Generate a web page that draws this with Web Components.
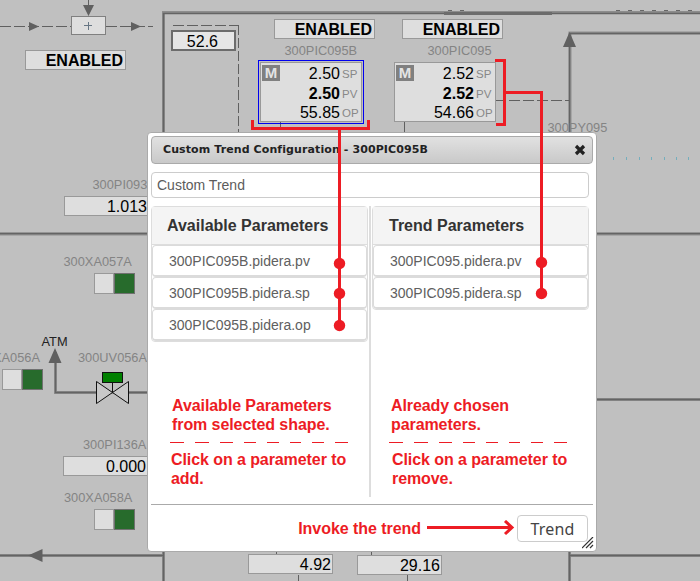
<!DOCTYPE html>
<html lang="en">
<head>
<meta charset="utf-8">
<title>Custom Trend Configuration</title>
<style>
body{margin:0;width:700px;height:581px;overflow:hidden;background:#c0c0c0;font-family:"Liberation Sans",Arial,sans-serif}
</style>
</head>
<body>
<trend-screen></trend-screen>
<script>
const define=(name,html,setup)=>customElements.define(name,class extends HTMLElement{
  connectedCallback(){
    if(this.shadowRoot)return;
    const t=document.createElement('template');t.innerHTML=html;
    this.attachShadow({mode:'open'}).append(t.content.cloneNode(true));
    if(setup)setup(this,this.shadowRoot);
  }
});
const place=el=>{for(const [a,p] of [['x','left'],['y','top'],['w','width'],['h','height']])
  if(el.hasAttribute(a))el.style[p]=el.getAttribute(a)+'px';};

/* Plain tag name next to an instrument */
define('tag-label',`<style>:host{position:absolute;font-size:12.8px;line-height:16px;color:#848484;white-space:nowrap}</style><slot></slot>`,place);

/* Bordered readout, right-aligned */
define('value-box',`<style>:host{position:absolute;box-sizing:border-box;border:1px solid #999;background:#dedede;color:#000;font-size:16px;line-height:20px;text-align:right;padding-right:1px;white-space:nowrap}
:host([bold]){font-weight:bold;padding-right:2px}
:host([frame]){border:2px solid #6c6c6c;background:#e6e6e6;padding-right:16px;line-height:19px}</style><slot></slot>`,place);

/* Two-segment status lamp */
define('status-lamp',`<style>:host{position:absolute;display:flex;width:41px;height:21px}
i{box-sizing:border-box;width:20px;border:1px solid #999;background:#dedede}i+i{width:21px;border-color:#707070;background:#276b2c}</style><i></i><i></i>`,place);

/* PID controller faceplate */
define('pid-face',`<style>:host{position:absolute;box-sizing:border-box;width:102px;height:60px;border:1px solid #999;background:#dedede;padding:0 4px 0 1px;display:grid;grid-template-columns:18px 1fr 17px;grid-template-rows:20px 19px 20px}
:host([selected]){outline:1px solid #0000f0;outline-offset:1px}
b.m{background:#808080;color:#e4e4e4;font:bold 15px/16px "Liberation Sans";width:18px;height:16px;margin-top:2px;text-align:center}
.v{font-size:16px;line-height:21px;text-align:right;color:#000}.s{font-size:11.5px;line-height:22px;color:#888;padding-left:2px}
.p{font-weight:bold}</style>
<b class="m">M</b><span class="v"><slot name="sp"></slot></span><span class="s">SP</span>
<i></i><span class="v p"><slot name="pv"></slot></span><span class="s">PV</span>
<i></i><span class="v"><slot name="op"></slot></span><span class="s">OP</span>`,place);

define('pipe-lines',`<style>:host{position:absolute;left:0;top:0}svg{display:block}</style>
<svg width="700" height="581" fill="none">
<g stroke="#8d8d8d" stroke-width="3">
<path d="M163.500 581V12.500H700M0 234H148M595 234H700M55.500 352V392.500H148M595 399.500H700M570 133V33H700M0 555.500H163M569.500 551V581M569.500 555.500H700"/>
</g>
<g stroke="#646464" stroke-width="1.400">
<path d="M163.500 581V13.500H700M0 233.500H148M595 233.500H700M55.500 352V392.500H148M595 399.500H700M569.500 133V33.500H700M0 555.500H163M569.500 551V581M569.500 555.500H700"/>
</g>
<path d="M444 13.500H552" stroke="#6c6c6c" stroke-width="3"/><path d="M448 10.500H466M616 10.500H693" stroke="#666" stroke-dasharray="4 8"/>
<g stroke="#606060"><path d="M0 26.500H71M106 26.500H153M173 25.500H239M495 100.500H569" stroke-dasharray="11 3"/>
<path d="M238.500 25V133" stroke-dasharray="10 3"/><path d="M88.500 0V8M280.500 122V129M404.500 121V133M276.500 551V554M298.500 575V581M371.500 551V555M407.500 575V581"/></g>
<g fill="#606060"><path d="M83 5H94L88.500 16ZM29 22L39 26.500L29 31ZM131 22L141 26.500L131 31ZM569.500 32L576 47H563ZM55 348L61.500 363H48.500ZM28 555.500L42.500 549V562Z"/></g>
<rect x="71.500" y="16.500" width="34" height="18" fill="#dedede" stroke="#808080"/>
<path d="M84 25.500H92M88.500 22V30" stroke="#677684"/>
<g stroke="#111"><path d="M112.500 383V393"/><rect x="102.500" y="372.500" width="20" height="10" fill="#008000"/><path d="M96.500 381.500L128.500 403.500V381.500L96.500 403.500Z" fill="#c8c8c8"/></g>
<path d="M613.500 157v3M626.500 157v3M639.500 157v3M651.500 157v3M664.500 157v3M676.500 157v3M688.500 157v3" stroke="#74aebd"/>
</svg>`);

define('param-item',`<style>:host{box-sizing:border-box;display:block;height:32px;border:1px solid #dbdbdb;border-bottom-width:2px;border-radius:4px;background:#fff;padding-left:16px;font-size:14px;line-height:30px;color:#606060}</style><slot></slot>`);

define('param-list',`<style>:host{box-sizing:border-box;display:block;width:217px;border:1px solid #ddd;border-radius:4px;background:#fff}
h2{box-sizing:border-box;margin:0;height:38px;border-bottom:1px solid #ddd;background:#f4f4f4;color:#333;font:bold 16px/38px "Liberation Sans",sans-serif;padding-left:var(--head-pad,15px)}</style>
<h2></h2><slot></slot>`,(el,r)=>r.querySelector('h2').textContent=el.getAttribute('heading'));

define('help-note',`<style>:host{display:block;color:#ed1c24;font-weight:bold;font-size:16px;line-height:19px;letter-spacing:-.08px}
.rule{display:block;margin:8px 0 7px -2px}.how{margin-left:var(--shift,0)}</style>
<div><slot name="what"></slot></div><svg class="rule" width="180" height="1"><path fill="#ed1c24" d="M0 0h14v1h-14zM25 0h14v1h-14zM50 0h13v1h-13zM74 0h12v1h-12zM97 0h12v1h-12zM120 0h11v1h-11zM142 0h12v1h-12zM165 0h13v1h-13z"/></svg><div class="how"><slot name="how"></slot></div>`);

define('trend-dialog',`<style>
:host{position:absolute;left:147px;top:132px;box-sizing:border-box;width:450px;height:420px;background:#fff;border:1px solid #aaa;border-radius:4px;padding:3px;display:flex;flex-direction:column}
header{box-sizing:border-box;flex:none;height:28px;border:1px solid #aaa;border-radius:4px;background:linear-gradient(#e1e1e1,#c9c9c9);display:flex;align-items:center;justify-content:space-between;padding:0 6px 0 11px;color:#222;font:bold 11px/26px "DejaVu Sans",sans-serif;letter-spacing:.1px}
.t{white-space:nowrap}
.field{box-sizing:border-box;flex:none;height:26px;width:438px;margin-top:8px;border:1px solid #ccc;border-radius:4px;padding-left:5px;font-size:14px;line-height:24px;color:#5c5c5c}
.cols{display:grid;grid-template-columns:217px 4px 217px;margin-top:8px;height:291px}
.bar{background:#ddd;width:2px;margin-left:1px}
.col{display:flex;flex-direction:column}
.notes{height:101px;margin-top:auto;padding-left:21px}
.notes.r{padding-left:19px}
.col.second{--head-pad:16px}
footer{border-top:1px solid #aaa;margin-top:7px;flex:1;display:flex;align-items:flex-start;justify-content:flex-end;padding:10px 5px 0 0}
.invoke{color:#ed1c24;font:bold 16px/27px "Liberation Sans",sans-serif;letter-spacing:-.05px;margin-right:6px}
.arrow{margin:5px 2px 0 0}
button{box-sizing:border-box;width:71px;height:27px;padding:0;border:1px solid #ccc;border-radius:4px;background:#fff;color:#444;font:16px/24px "Noto Sans",sans-serif;letter-spacing:.2px}
.grip{position:absolute;right:2px;bottom:2px}
</style>
<header><span class="t"><slot name="title"></slot></span><svg width="12" height="12"><path d="M2 2L10 10M10 2L2 10" stroke="#222" stroke-width="3.200"/></svg></header>
<div class="field"><slot name="name"></slot></div>
<div class="cols"><div class="col"><slot name="left"></slot><div class="notes"><slot name="leftnote"></slot></div></div><div class="bar"></div><div class="col second"><slot name="right"></slot><div class="notes r"><slot name="rightnote"></slot></div></div></div>
<footer><span class="invoke">Invoke the trend</span><svg class="arrow" width="88" height="16"><path d="M0 7.500H85M78 1L85 7.500L78 14" fill="none" stroke="#ed1c24" stroke-width="3"/></svg><button>Trend</button></footer>
<svg class="grip" width="12" height="12"><path d="M0 11L11 0M4 11L11 4M8 11L11 8" stroke="#333" stroke-width="1.200"/></svg>`);

define('callout-lines',`<style>:host{position:absolute;left:0;top:0;pointer-events:none}svg{display:block}</style>
<svg width="700" height="581"><g fill="none" stroke="#ed1c24" stroke-width="3"><path d="M252.500 120V128.500H368.500V120M339.500 128V325M495 60.500H504.500V124.500H496M504 92.500H541.500V294"/></g>
<g fill="#ed1c24"><circle cx="339.500" cy="263.500" r="5.700"/><circle cx="339.500" cy="293.500" r="5.700"/><circle cx="339.500" cy="325.500" r="5.700"/><circle cx="541.500" cy="262.500" r="5.700"/><circle cx="541.500" cy="293.500" r="5.700"/></g></svg>`);

define('trend-screen',`<style>:host{display:block;position:relative;width:700px;height:581px;overflow:hidden}</style>
<pipe-lines></pipe-lines>
<value-box bold x="25" y="50" w="101" h="20">ENABLED</value-box>
<value-box bold x="274" y="19" w="101" h="20">ENABLED</value-box>
<value-box bold x="402" y="19" w="101" h="20">ENABLED</value-box>
<value-box frame x="171" y="30" w="65" h="21">52.6</value-box>
<tag-label x="284.500" y="43">300PIC095B</tag-label><tag-label x="427.500" y="43">300PIC095</tag-label>
<tag-label x="547.500" y="120">300PY095</tag-label><tag-label x="92.500" y="177">300PI093</tag-label>
<tag-label x="63.500" y="254">300XA057A</tag-label><tag-label x="-7" y="350">XA056A</tag-label>
<tag-label x="78" y="350">300UV056A</tag-label><tag-label x="83" y="437">300PI136A</tag-label>
<tag-label x="64" y="490">300XA058A</tag-label><tag-label x="41.500" y="334" style="color:#222">ATM</tag-label>
<value-box x="64" y="196" w="101" h="20" style="padding-right:17px">1.013</value-box>
<value-box x="63" y="456" w="101" h="20" style="padding-right:17px">0.000</value-box>
<value-box x="248" y="554" w="85" h="20">4.92</value-box>
<value-box x="357" y="555" w="85" h="20">29.16</value-box>
<status-lamp x="94" y="273"></status-lamp><status-lamp x="2" y="369"></status-lamp><status-lamp x="94" y="509"></status-lamp>
<pid-face selected x="260" y="62"><span slot="sp">2.50</span><span slot="pv">2.50</span><span slot="op">55.85</span></pid-face>
<pid-face x="394" y="62"><span slot="sp">2.52</span><span slot="pv">2.52</span><span slot="op">54.66</span></pid-face>
<trend-dialog>
<span slot="title">Custom Trend Configuration - 300PIC095B</span><span slot="name">Custom Trend</span>
<param-list slot="left" heading="Available Parameters"><param-item>300PIC095B.pidera.pv</param-item><param-item>300PIC095B.pidera.sp</param-item><param-item>300PIC095B.pidera.op</param-item></param-list>
<param-list slot="right" heading="Trend Parameters"><param-item>300PIC095.pidera.pv</param-item><param-item>300PIC095.pidera.sp</param-item></param-list>
<help-note slot="leftnote" style="--shift:-1px"><span slot="what">Available Parameters<br>from selected shape.</span><span slot="how">Click on a parameter to<br>add.</span></help-note>
<help-note slot="rightnote" style="--shift:1px"><span slot="what">Already chosen<br>parameters.</span><span slot="how">Click on a parameter to<br>remove.</span></help-note>
</trend-dialog>
<callout-lines></callout-lines>`);
</script>
</body>
</html>
